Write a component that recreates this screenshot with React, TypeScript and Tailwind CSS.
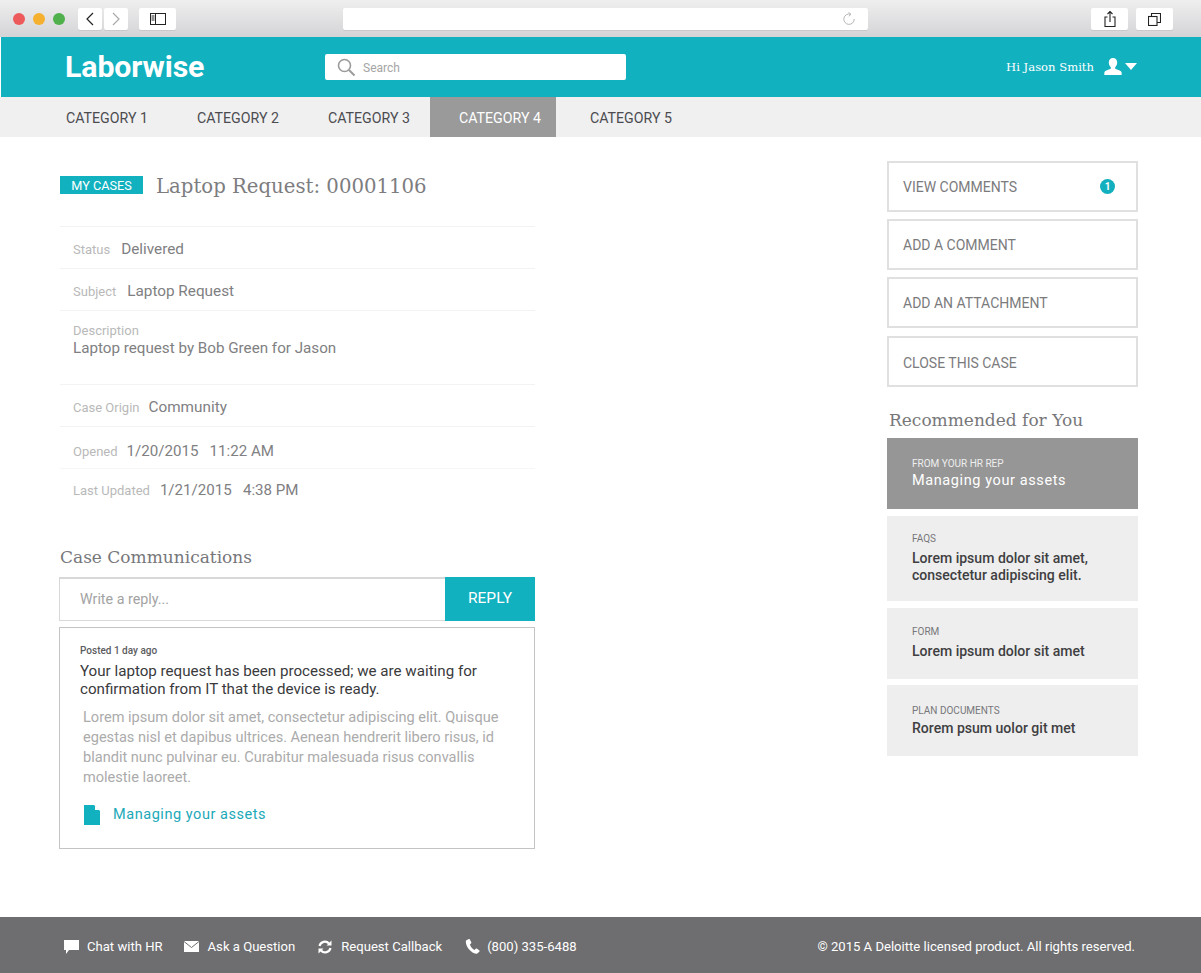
import React from "react";

const sans = "font-['Roboto','Liberation_Sans',sans-serif]";
const slab = "font-['DejaVu_Serif','Liberation_Serif',serif]";

function ToolBtn({ w, children }: { w: string; children: React.ReactNode }) {
  return <div className={`${w} h-[22px] bg-white rounded-[2px] flex items-center justify-center shadow-[0_1px_0_#c9c9cb]`}>{children}</div>;
}

function Row({ label, value, className, gap, size = "text-[15.3px]" }: { label: string; value: string; className: string; gap: string; size?: string }) {
  return (
    <div className={`flex items-center pl-[13px] whitespace-pre ${gap} ${className}`}>
      <span className="text-[13px] mt-[1px] text-[#b9b9b9]">{label}</span>
      <span className={`${size} text-[#808082]`}>{value}</span>
    </div>
  );
}

function ActionBtn({ label, badge, mb, pt }: { label: string; badge?: boolean; mb: string; pt: string }) {
  return (
    <div className={`h-[51px] ${mb} ${pt} border-2 border-[#e0e0e0] flex items-center justify-between pl-[14px] pr-[21px] text-[14px] text-[#7b7b7d]`}>
      <span>{label}</span>
      {badge && <span className="w-[15px] h-[15px] mb-[2px] rounded-full bg-[#12b0bf] text-white text-[10px] font-bold flex items-center justify-center">1</span>}
    </div>
  );
}

function RecCard({ tag, children, h, mb, pt, tagMb }: { tag: string; children: React.ReactNode; h: string; mb: string; pt: string; tagMb: string }) {
  return (
    <div className={`${h} ${mb} ${pt} bg-[#eeeeee] pl-[25px]`}>
      <div className={`text-[10px] leading-[13px] text-[#77777a] ${tagMb}`}>{tag}</div>
      <div className="text-[14.05px] leading-[17px] font-medium text-[#3f3f42]">{children}</div>
    </div>
  );
}

function FooterItem({ icon, label, gap }: { icon: React.ReactNode; label: string; gap: string }) {
  return (
    <div className={`flex items-center ${gap}`}>
      {icon}
      <span>{label}</span>
    </div>
  );
}

export default function App() {
  return (
    <div className={`w-[1201px] h-[973px] flex flex-col bg-white overflow-hidden ${sans}`}>
      {/* browser chrome */}
      <div className="h-[37px] shrink-0 bg-gradient-to-b from-[#efeff0] to-[#d4d4d6] flex items-center pl-[13px] pr-[28px] pt-[1px]">
        <div className="flex items-center gap-[8px]">
          <span className="w-[12px] h-[12px] rounded-full bg-[#ec5a5c]" />
          <span className="w-[12px] h-[12px] rounded-full bg-[#f4b02e]" />
          <span className="w-[12px] h-[12px] rounded-full bg-[#4fb04c]" />
        </div>
        <div className="flex gap-[2px] ml-[13px]">
          <ToolBtn w="w-[24px]">
            <svg width="10" height="14" viewBox="0 0 10 14" fill="none" stroke="#222" strokeWidth="1.2"><path d="M8 1 2 7l6 6" /></svg>
          </ToolBtn>
          <ToolBtn w="w-[24px]">
            <svg width="10" height="14" viewBox="0 0 10 14" fill="none" stroke="#aaa" strokeWidth="1.2"><path d="M2 1l6 6-6 6" /></svg>
          </ToolBtn>
        </div>
        <div className="ml-[11px]">
          <ToolBtn w="w-[37px]">
            <svg width="16" height="12" viewBox="0 0 16 12" fill="none" stroke="#222" strokeWidth="1"><rect x="0.5" y="0.5" width="15" height="11" /><path d="M5.5 0.5v11M1.5 3h3M1.5 5h3M1.5 7h3" /></svg>
          </ToolBtn>
        </div>
        <div className="ml-[167px] w-[525px]">
          <div className="h-[22px] bg-white rounded-[2px] flex items-center justify-end pr-[12px] shadow-[0_1px_0_#c9c9cb]">
            <svg width="14" height="14" viewBox="0 0 14 14" fill="none" stroke="#b5b5b5" strokeWidth="1"><path d="M8.5 2.2A5.2 5.2 0 1 0 12.2 7" /><path d="M6.5 0.5l2.5 1.7-2.2 2.1" /></svg>
          </div>
        </div>
        <div className="ml-auto flex gap-[8px]">
          <ToolBtn w="w-[37px]">
            <svg width="12" height="18" viewBox="0 0 12 18" fill="none" stroke="#222" strokeWidth="1.1"><path d="M3.5 7H1v9.5h10V7H8.500M6 12V1.500M3.500 4 6 1.500 8.500 4" /></svg>
          </ToolBtn>
          <ToolBtn w="w-[37px]">
            <svg width="13" height="13" viewBox="0 0 13 13" fill="none" stroke="#222" strokeWidth="1.1"><rect x="0.5" y="3.5" width="8.5" height="9" /><path d="M3.500 3.500v-3h9v9H9" /></svg>
          </ToolBtn>
        </div>
      </div>

      {/* header */}
      <header className="h-[60px] shrink-0 bg-[#12b1c0] flex items-center ml-[1px] pl-[64px] pr-[63px]">
        <div className="w-[260px] text-[30.300px] font-bold text-white tracking-[-0.1px]">Laborwise</div>
        <div className="w-[301px] h-[26px] bg-white rounded-[2px] flex items-center pl-[12px]">
          <svg width="19" height="19" viewBox="0 0 19 19" fill="none" stroke="#9b9b9b" strokeWidth="1.6"><circle cx="7.5" cy="7.5" r="6" /><path d="M12 12l5.500 5.500" strokeWidth="2" /></svg>
          <span className="ml-[7px] mt-[1px] text-[12px] text-[#a5a5a5]">Search</span>
        </div>
        <div className="ml-auto flex items-center text-white">
          <span className={`text-[11.600px] mt-[2px] ${slab}`}>Hi Jason Smith</span>
          <svg className="ml-[10px]" width="18" height="17" viewBox="0 0 18 17" fill="#fff"><path d="M9 0c2.600 0 4.200 2 4.200 4.600 0 2-.9 3.600-2 4.600v1.500c2.400.8 5.800 1.800 6.300 3.300.2.900.2 2.300.2 3H.3c0-.7 0-2.100.2-3 .5-1.500 3.900-2.500 6.300-3.300V9.200c-1.100-1-2-2.600-2-4.600C4.800 2 6.400 0 9 0z" /></svg>
          <svg className="ml-[3px] mr-[1px]" width="12" height="7" viewBox="0 0 12 7" fill="#fff"><path d="M0 0h12L6 7z" /></svg>
        </div>
      </header>

      {/* nav */}
      <nav className="h-[40px] shrink-0 bg-[#f0f0f1] flex pl-[66px] text-[14.200px] text-[#4c4c50]">
        <div className="w-[131px] pt-[3px] flex items-center">CATEGORY 1</div>
        <div className="w-[131px] pt-[3px] flex items-center">CATEGORY 2</div>
        <div className="w-[102px] pt-[3px] flex items-center">CATEGORY 3</div>
        <div className="w-[126px] pt-[3px] flex items-center pl-[29px] bg-[#9a9a9a] text-white">CATEGORY 4</div>
        <div className="flex pt-[3px] items-center pl-[34px]">CATEGORY 5</div>
      </nav>

      {/* main */}
      <main className="flex-1 flex justify-between pl-[59px] pr-[63px]">
        <section className="w-[476px] pt-[39px]">
          <div className="flex items-center h-[18px] pl-[1px]">
            <span className="w-[83px] h-[18px] pt-[1px] bg-[#12b1c0] text-white text-[12.700px] flex items-center justify-center">MY CASES</span>
            <h1 className={`ml-[13px] mt-[4px] text-[19.700px] text-[#7d7d7f] whitespace-nowrap ${slab}`}>Laptop Request: 00001106</h1>
          </div>
          <div className="mt-[32px] ml-[1px] border-t border-[#f3f3f3]">
            <Row label="Status" value="Delivered" gap="gap-[11px]" className="h-[42px] pt-[3px] border-b border-[#f3f3f3]" />
            <Row label="Subject" value="Laptop Request" gap="gap-[11px]" className="h-[42px] pt-[3px] border-b border-[#f3f3f3]" />
            <div className="h-[74px] pl-[13px] pt-[12px] border-b border-[#f3f3f3]">
              <div className="text-[13px] leading-[15px] text-[#b9b9b9]">Description</div>
              <div className="text-[15.200px] leading-[20px] text-[#808082]">Laptop request by Bob Green for Jason</div>
            </div>
            <Row label="Case Origin" value="Community" gap="gap-[9px]" className="h-[42px] pt-[3px] border-b border-[#f3f3f3]" />
            <Row label="Opened" value="1/20/2015   11:22 AM" size="text-[15.100px]" gap="gap-[9px]" className="h-[42px] pt-[7px] border-b border-[#f6f6f6]" />
            <Row label="Last Updated" value="1/21/2015   4:38 PM" size="text-[15.100px]" gap="gap-[10px]" className="h-[42px]" />
          </div>
          <h2 className={`mt-[35px] ml-[1px] text-[17px] leading-[22px] text-[#77777a] ${slab}`}>Case Communications</h2>
          <div className="mt-[9px] flex h-[44px]">
            <div className="w-[386px] border border-r-0 border-t-2 border-[#d8d8d8] flex items-center pl-[20px] text-[14.300px] text-[#a3a3a3]">Write a reply...</div>
            <div className="w-[90px] bg-[#12b1c0] text-white text-[15.500px] flex items-center justify-center">REPLY</div>
          </div>
          <article className="mt-[6px] h-[222px] border border-[#c4c4c4] pl-[20px] pr-[20px] pt-[17px]">
            <div className="text-[10px] leading-[12px] font-medium text-[#5c5c60]">Posted 1 day ago</div>
            <p className="mt-[5px] text-[15.150px] leading-[18px] text-[#3a3a3d]">Your laptop request has been processed; we are waiting for confirmation from IT that the device is ready.</p>
            <p className="mt-[9px] ml-[3px] text-[14.570px] leading-[20px] text-[#ababab]">Lorem ipsum dolor sit amet, consectetur adipiscing elit. Quisque egestas nisl et dapibus ultrices. Aenean hendrerit libero risus, id blandit nunc pulvinar eu. Curabitur malesuada risus convallis molestie laoreet.</p>
            <div className="mt-[17px] ml-[4px] flex items-center">
              <svg width="16" height="20" viewBox="0 0 16 20" fill="#12b1c0"><path d="M0 0h10l6 6v14H0z" /><path d="M11 0.500 15.500 5h-4.500z" fill="#fff" /></svg>
              <span className="ml-[13px] text-[14.500px] tracking-[0.55px] text-[#1ba9b8]">Managing your assets</span>
            </div>
          </article>
        </section>

        <aside className="w-[251px] pt-[24px]">
          <ActionBtn label="VIEW COMMENTS" badge mb="mb-[7px]" pt="pt-[2px]" />
          <ActionBtn label="ADD A COMMENT" mb="mb-[7px]" pt="pt-[2px]" />
          <ActionBtn label="ADD AN ATTACHMENT" mb="mb-[8px]" pt="pt-[2px]" />
          <ActionBtn label="CLOSE THIS CASE" mb="mb-[0px]" pt="pt-[4px]" />
          <h2 className={`mt-[22px] mb-[6px] ml-[2px] text-[17px] leading-[23px] text-[#77777a] ${slab}`}>Recommended for You</h2>
          <div className="h-[71px] mb-[7px] pt-[19px] bg-[#969696] pl-[25px] text-white">
            <div className="text-[10px] leading-[13px] text-[#eeeeee] mb-[1px]">FROM YOUR HR REP</div>
            <div className="text-[14.500px] leading-[19px] tracking-[0.6px]">Managing your assets</div>
          </div>
          <RecCard tag="FAQS" h="h-[85px]" mb="mb-[7px]" pt="pt-[16px]" tagMb="mb-[5px]">Lorem ipsum dolor sit amet,<br />consectetur adipiscing elit.</RecCard>
          <RecCard tag="FORM" h="h-[71px]" mb="mb-[6px]" pt="pt-[17px]" tagMb="mb-[5px]">Lorem ipsum dolor sit amet</RecCard>
          <RecCard tag="PLAN DOCUMENTS" h="h-[71px]" mb="mb-0" pt="pt-[19px]" tagMb="mb-[3px]">Rorem psum uolor git met</RecCard>
        </aside>
      </main>

      {/* footer */}
      <footer className="h-[56px] shrink-0 bg-[#6e6e70] flex items-center pl-[64px] pr-[66px] pt-[4px] text-[13.100px] text-white">
        <div className="flex items-center">
          <FooterItem label="Chat with HR" gap="gap-[8px] mr-[21px]" icon={
            <svg width="15" height="15" viewBox="0 0 15 15" fill="#fff"><path d="M0 1h15v10H5l-3 4v-4H0z" /></svg>
          } />
          <FooterItem label="Ask a Question" gap="gap-[9px] mr-[23px]" icon={
            <svg width="15" height="11" viewBox="0 0 15 11"><rect width="15" height="11" fill="#fff" /><path d="M0 .5l7.500 6 7.500-6" fill="none" stroke="#6e6e70" strokeWidth="1" /></svg>
          } />
          <FooterItem label="Request Callback" gap="gap-[9px] mr-[23px]" icon={
            <svg width="14" height="14" viewBox="0 0 14 14" fill="none" stroke="#fff" strokeWidth="2.200"><path d="M1.500 6a5.500 5.500 0 0 1 9.500-2.500M12.500 8A5.500 5.500 0 0 1 3 10.500" /><path d="M13.500 0.500v5h-5zM.5 13.500v-5h5z" fill="#fff" stroke="none" /></svg>
          } />
          <FooterItem label="(800) 335-6488" gap="gap-[7px]" icon={
            <svg width="15" height="15" viewBox="0 0 15 15" fill="#fff"><path d="M3.800 0 1 1.500C.4 3.500 1.500 7 3.500 9.700c2.300 3 5.700 5.100 8.500 5.100l2.500-2.300c.2-.4.200-.7-.1-1L11.800 9.600c-.4-.2-.7-.2-1 .1l-1.400 1.400C7.700 10.300 5.300 7.500 4.900 5.600l1.300-1.400c.2-.3.200-.6.100-.9L4.700.2C4.400 0 4.100-.1 3.800 0z" /></svg>
          } />
        </div>
        <div className="ml-auto">© 2015 A Deloitte licensed product. All rights reserved.</div>
      </footer>
    </div>
  );
}
